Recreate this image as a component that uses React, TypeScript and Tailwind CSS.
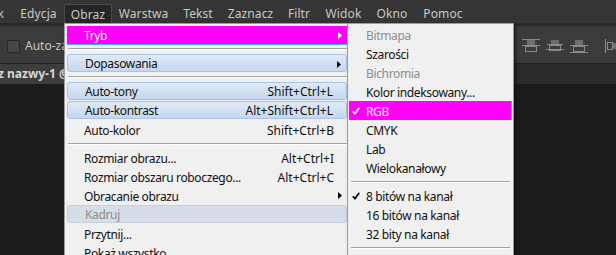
import React from "react"

type Row =
  | "sep"
  | {
      label: string
      shortcut?: string
      arrow?: boolean
      look?: "pink" | "blue" | "pale"
      dim?: boolean
      check?: boolean
    }

const mainItems: Row[] = [
  { label: "Tryb", arrow: true, look: "pink" },
  "sep",
  { label: "Dopasowania", arrow: true, look: "blue" },
  "sep",
  { label: "Auto-tony", shortcut: "Shift+Ctrl+L", look: "blue" },
  { label: "Auto-kontrast", shortcut: "Alt+Shift+Ctrl+L", look: "blue" },
  { label: "Auto-kolor", shortcut: "Shift+Ctrl+B" },
  "sep",
  { label: "Rozmiar obrazu...", shortcut: "Alt+Ctrl+I" },
  { label: "Rozmiar obszaru roboczego...", shortcut: "Alt+Ctrl+C" },
  { label: "Obracanie obrazu", arrow: true },
  { label: "Kadruj", look: "pale", dim: true },
  { label: "Przytnij..." },
  { label: "Pokaż wszystko" },
]

const subItems: Row[] = [
  { label: "Bitmapa", dim: true },
  { label: "Szarości" },
  { label: "Bichromia", dim: true },
  { label: "Kolor indeksowany..." },
  { label: "RGB", look: "pink", check: true },
  { label: "CMYK" },
  { label: "Lab" },
  { label: "Wielokanałowy" },
  "sep",
  { label: "8 bitów na kanał", check: true },
  { label: "16 bitów na kanał" },
  { label: "32 bity na kanał" },
  "sep",
]

const menuBar = [
  { name: "Plik", w: "w-[43px] -ml-[30px] justify-end pr-[9px]" },
  { name: "Edycja", w: "w-[51px] justify-center" },
  { name: "Obraz", w: "w-[48px] justify-center", open: true },
  { name: "Warstwa", w: "w-[63px] justify-center" },
  { name: "Tekst", w: "w-[46px] justify-center" },
  { name: "Zaznacz", w: "w-[59px] justify-center" },
  { name: "Filtr", w: "w-[38px] justify-center" },
  { name: "Widok", w: "w-[51px] justify-center" },
  { name: "Okno", w: "w-[46px] justify-center" },
  { name: "Pomoc", w: "w-[56px] justify-center" },
]

function Arrow({ white }: { white?: boolean }) {
  return (
    <svg width="4" height="7" viewBox="0 0 4 7" className="absolute right-[5px] top-[6px]">
      <path d="M0 0L4 3.5L0 7Z" fill={white ? "#ffffff" : "#000000"} />
    </svg>
  )
}

function Check({ white }: { white?: boolean }) {
  return (
    <svg width="8" height="8" viewBox="0 0 8 8" className="absolute left-[3px] top-[6px]">
      <path d="M0.8 4.2L3 6.6L7.3 0.8" fill="none" stroke={white ? "#ffffff" : "#000000"} strokeWidth="1.7" />
    </svg>
  )
}

function Sep({ top = "pt-[3px]", x = "" }: { top?: string; x?: string }) {
  return (
    <div className={`h-[9px] ${top} ${x}`}>
      <div className="h-px bg-[#a3a3a3]" />
      <div className="h-px bg-white" />
    </div>
  )
}

function MenuRow({ item, sub }: { item: Exclude<Row, "sep">; sub?: boolean }) {
  let look = ""
  if (item.look === "pink")
    look = sub ? "bg-[#ff00ff] border-r border-[#3ab4f2]" : "bg-[#ff00ff] border-b border-[#3ab4f2]"
  if (item.look === "blue")
    look = "rounded-[3px] border border-[#a9c4e6] bg-linear-to-b from-[#e0eaf7] to-[#c5d7ef]"
  if (item.look === "pale") look = "rounded-[3px] border border-[#c4d1e2] bg-[#d5dde8]"
  const color = item.look === "pink" ? "text-white" : item.dim ? "text-[#8e8e8e]" : "text-[#111111]"
  return (
    <div className={`h-[19px] ${item.look === "blue" || item.look === "pale" ? "pb-px" : ""}`}>
      <div
        className={`relative flex h-full items-center justify-between pl-[17px] pt-[2px] ${
          sub ? "pr-2" : "pr-[13px]"
        } ${look} ${color}`}
      >
        {item.check && <Check white={item.look === "pink"} />}
        <span className="tracking-[-0.35px]">{item.label}</span>
        {item.shortcut && <span>{item.shortcut}</span>}
        {item.arrow && <Arrow white={item.look === "pink"} />}
      </div>
    </div>
  )
}

function AlignIcon({ kind }: { kind: "top" | "mid" | "bottom" }) {
  return (
    <svg width="18" height="14" viewBox="0 0 18 14">
      {kind === "top" && (
        <g>
          <path d="M0 0.5H18M0 6.5H18" stroke="#8a8a8a" />
          <rect x="5" y="1" width="8" height="5" fill="#6e6e6e" />
          <rect x="3.5" y="7.5" width="11" height="5" fill="none" stroke="#8a8a8a" />
        </g>
      )}
      {kind === "mid" && (
        <g>
          <rect x="5" y="1" width="8" height="4" fill="#6e6e6e" />
          <path d="M1 5.5H17M0 10.5H18" stroke="#8a8a8a" />
          <rect x="3.5" y="6.5" width="11" height="5" fill="none" stroke="#8a8a8a" />
        </g>
      )}
      {kind === "bottom" && (
        <g>
          <rect x="5" y="1" width="8" height="5" fill="#6e6e6e" />
          <path d="M0 6.5H18M0 13.5H18" stroke="#8a8a8a" />
          <rect x="3.5" y="7.5" width="11" height="5" fill="none" stroke="#8a8a8a" />
        </g>
      )}
    </svg>
  )
}

export default function App() {
  return (
    <div className="relative h-[255px] w-[616px] overflow-hidden bg-[#1c1c1c] font-['Noto_Sans',sans-serif] text-[12px]">
      {/* menu bar */}
      <div className="flex h-[23px] items-end bg-[#353535] text-[12px] tracking-[0.1px] text-[#c8c8c8]">
        {menuBar.map((m) => (
          <div
            key={m.name}
            className={`flex h-[19px] shrink-0 items-center pt-px ${m.w} ${
              m.open ? "rounded-t-[2px] border border-b-0 border-[#4a4a4a] bg-[#262626]" : ""
            }`}
          >
            {m.name}
          </div>
        ))}
      </div>

      {/* options bar */}
      <div className="flex h-[40px] items-center border-t-[3px] border-[#292929] bg-[#3b3b3b] pl-[7px]">
        <div className="mt-[3px] h-[13px] w-[13px] rounded-[2px] border border-[#262626] bg-[#474747]" />
        <span className="ml-[5px] mt-[3px] text-[#c4c4c4]">Auto-zaznaczanie:</span>
        <div className="ml-auto mt-[2px] flex items-center gap-[6px]">
          <AlignIcon kind="top" />
          <AlignIcon kind="mid" />
          <AlignIcon kind="bottom" />
          <svg width="16" height="14" viewBox="0 0 16 14" className="ml-[9px] -mr-[3px]">
            <path d="M2.5 0V14" stroke="#8a8a8a" />
            <rect x="4.5" y="3.5" width="5" height="7" fill="none" stroke="#8a8a8a" />
            <rect x="10" y="4" width="6" height="6" fill="#6e6e6e" />
          </svg>
        </div>
      </div>

      {/* document tabs */}
      <div className="flex h-[21px] border-t border-[#1f1f1f] bg-[#2b2b2b]">
        <div className="flex w-[200px] items-center overflow-hidden bg-[#3d3d3d]">
          <span className="-ml-[17px] whitespace-nowrap font-bold text-[#d6d6d6]">Bez nazwy-1 @ 66,7% (RGB/8)</span>
        </div>
      </div>

      {/* Obraz menu */}
      <div className="absolute left-[64px] top-[23px] h-[240px] w-[284px] border border-[#9b9b9b] bg-[#f0f0f0] pl-[2px] pt-[2px] shadow-[2px_2px_3px_rgba(0,0,0,0.4)]">
        {mainItems.map((it, i) =>
          it === "sep" ? (
            <Sep key={i} top={i === 7 ? "pt-[4px]" : "pt-[3px]"} x="ml-px" />
          ) : (
            <MenuRow key={i} item={it} />
          ),
        )}
      </div>

      {/* Tryb submenu */}
      <div className="absolute left-[347px] top-[23px] h-[240px] w-[167px] border border-[#9b9b9b] bg-[#f0f0f0] px-px pt-px shadow-[2px_2px_3px_rgba(0,0,0,0.5)]">
        {subItems.map((it, i) =>
          it === "sep" ? <Sep key={i} top="pt-[4px]" x="mx-[2px]" /> : <MenuRow key={i} item={it} sub />,
        )}
      </div>
    </div>
  )
}
